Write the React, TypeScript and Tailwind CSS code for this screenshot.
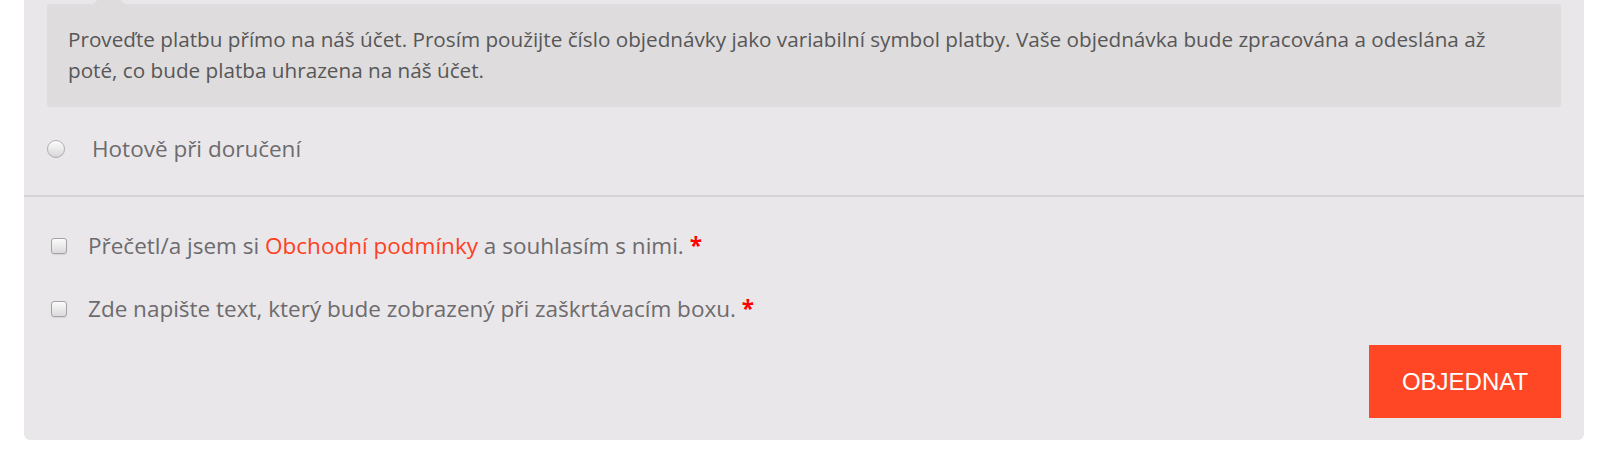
export default function App() {
  return (
    <div className="w-full bg-white pl-[24px] pr-[29px] pb-[29px] font-['Open_Sans',sans-serif]">
      <div className="bg-[#e9e7ea] rounded-b-[6px]">
        {/* Payment methods */}
        <div className="px-[23px] pt-[4px] pb-[31px] border-b-2 border-[#d5d3d6]">
          <div className="relative bg-[#dedcdd] rounded-[3px] pl-[21px] pr-[48px] pt-[20px] pb-[21px] text-[20.7px] leading-[31px] text-[#575757]">
            <span className="absolute left-[46px] -top-[14px] w-0 h-0 border-x-[16px] border-x-transparent border-b-[14px] border-b-[#dedcdd]" />
            Proveďte platbu přímo na náš účet. Prosím použijte číslo objednávky jako variabilní symbol platby. Vaše objednávka
            bude zpracována a odeslána až poté, co bude platba uhrazena na náš účet.
          </div>
          <label className="mt-[27px] flex items-center">
            <span className="w-[18px] h-[18px] rounded-full border border-[#adacae] bg-gradient-to-b from-[#fdfdfd] to-[#d8d8d8] shadow-[inset_0_1px_1px_rgba(255,255,255,0.8)]" />
            <span className="ml-[27px] text-[22.5px] leading-[30px] text-[#6d6b6d]">Hotově při doručení</span>
          </label>
        </div>

        {/* Terms */}
        <div className="px-[23px] pt-[34px] pb-[22px]">
          <div className="flex flex-col gap-[33px] pl-[4px]">
            <label className="flex items-center text-[22.5px] leading-[30px] text-[#6d6b6d]">
              <span className="w-[16px] h-[16px] rounded-[3px] border border-[#a3a2a4] bg-gradient-to-b from-[#fbfbfb] to-[#dadada] shadow-[0_1px_1px_rgba(0,0,0,0.08)]" />
              <span className="ml-[21px]">
                Přečetl/a jsem si <a className="text-[#ff3f22]">Obchodní podmínky</a> a souhlasím s nimi.{" "}
                <span className="text-[#ff0000] font-bold">*</span>
              </span>
            </label>
            <label className="flex items-center text-[22.5px] leading-[30px] text-[#6d6b6d]">
              <span className="w-[16px] h-[16px] rounded-[3px] border border-[#a3a2a4] bg-gradient-to-b from-[#fbfbfb] to-[#dadada] shadow-[0_1px_1px_rgba(0,0,0,0.08)]" />
              <span className="ml-[21px]">
                Zde napište text, který bude zobrazený při zaškrtávacím boxu.{" "}
                <span className="text-[#ff0000] font-bold">*</span>
              </span>
            </label>
          </div>
          <div className="flex justify-end mt-[21px]">
            <button className="w-[192px] h-[73px] bg-[#ff4726] text-white text-[24px] font-['Liberation_Sans',Arial,sans-serif]">
              OBJEDNAT
            </button>
          </div>
        </div>
      </div>
    </div>
  );
}
